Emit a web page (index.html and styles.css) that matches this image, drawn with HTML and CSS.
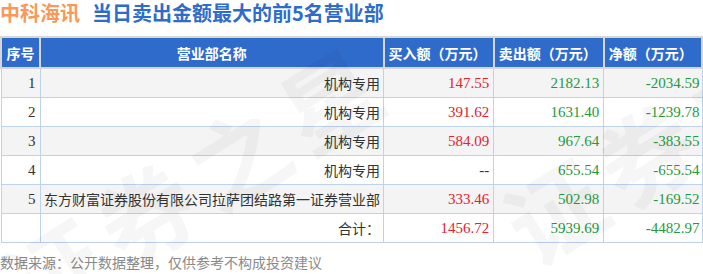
FILE: index.html
```html
<!DOCTYPE html>
<html lang="zh">
<head>
<meta charset="utf-8">
<link rel="stylesheet" href="styles.css">
</head>
<body>
<div class="page">
  <h1 class="title"><span class="stock">中科海讯</span><span class="sub">当日卖出金额最大的前5名营业部</span></h1>
  <table class="data">
    <thead>
      <tr>
        <th class="c1">序号</th>
        <th class="c2">营业部名称</th>
        <th class="c3">买入额（万元）</th>
        <th class="c4">卖出额（万元）</th>
        <th class="c5">净额（万元）</th>
      </tr>
    </thead>
    <tbody>
      <tr class="odd"><td>1</td><td>机构专用</td><td class="red">147.55</td><td class="green">2182.13</td><td class="green">-2034.59</td></tr>
      <tr><td>2</td><td>机构专用</td><td class="red">391.62</td><td class="green">1631.40</td><td class="green">-1239.78</td></tr>
      <tr class="odd"><td>3</td><td>机构专用</td><td class="red">584.09</td><td class="green">967.64</td><td class="green">-383.55</td></tr>
      <tr><td>4</td><td>机构专用</td><td class="dash">--</td><td class="green">655.54</td><td class="green">-655.54</td></tr>
      <tr class="odd"><td>5</td><td>东方财富证券股份有限公司拉萨团结路第一证券营业部</td><td class="red">333.46</td><td class="green">502.98</td><td class="green">-169.52</td></tr>
      <tr><td></td><td>合计：</td><td class="red">1456.72</td><td class="green">5939.69</td><td class="green">-4482.97</td></tr>
    </tbody>
  </table>
  <p class="note">数据来源：公开数据整理，仅供参考不构成投资建议</p>
  <div class="wm wm1">证券之星</div>
  <div class="wm wm2">证券之星</div>
</div>
</body>
</html>
```
FILE: styles.css
```css
html, body {
  margin: 0;
  padding: 0;
  background: #fff;
}
.page {
  position: relative;
  width: 703px;
  height: 274px;
  overflow: hidden;
  font-family: "Noto Sans CJK SC", sans-serif;
}
.title {
  margin: 0;
  padding: 0;
  line-height: 26px;
  font-size: 20px;
  font-weight: bold;
  white-space: nowrap;
}
.stock {
  color: #f7995a;
  margin-right: 12px;
}
.sub {
  color: #2e6cc9;
}
.data {
  margin-top: 10px;
  margin-left: 0;
  width: 703px;
  border-collapse: collapse;
  table-layout: fixed;
  font-size: 14px;
}
.data th {
  background: #2f6bcb;
  color: #fff;
  font-weight: bold;
  font-size: 14px;
  height: 29px;
  padding: 0;
  border: 2px solid #d6d6d6;
  text-align: center;
}
.data th.c3, .data th.c4, .data th.c5 {
  text-align: left;
  padding-left: 4px;
}
.data th.c1 { width: 37px; }
.data th.c2 { width: 341px; }
.data th.c3 { width: 104px; }
.data th.c4 { width: 104px; }
.data th.c5 { width: 92px; }
.data td {
  height: 28px;
  padding: 0 4px;
  border: 1px solid #bdd3ea;
  text-align: right;
  color: #333;
  font-family: "Liberation Serif", "Noto Sans CJK SC", serif;
  font-size: 15px;
  white-space: nowrap;
}
.data td:nth-child(2) {
  font-family: "Noto Sans CJK SC", sans-serif;
  font-size: 14px;
  padding: 0 3px 0 1px;
}
.data td:nth-child(5) {
  padding-right: 2px;
}
.data tr.odd td {
  background: #f4f4f4;
}
.red { color: #e6202d !important; }
.green { color: #1f9a3e !important; }
.dash { color: #333; }
.note {
  margin: 11px 0 0 0;
  font-size: 14px;
  color: #8a8a8a;
  line-height: 17px;
}
.wm {
  position: absolute;
  font-size: 96px;
  font-weight: bold;
  color: rgba(0, 0, 0, 0.035);
  transform: rotate(-32deg);
  white-space: nowrap;
  pointer-events: none;
  letter-spacing: 12px;
}
.wm1 {
  left: -20px;
  top: 110px;
}
.wm2 {
  left: 480px;
  top: 50px;
}
```
